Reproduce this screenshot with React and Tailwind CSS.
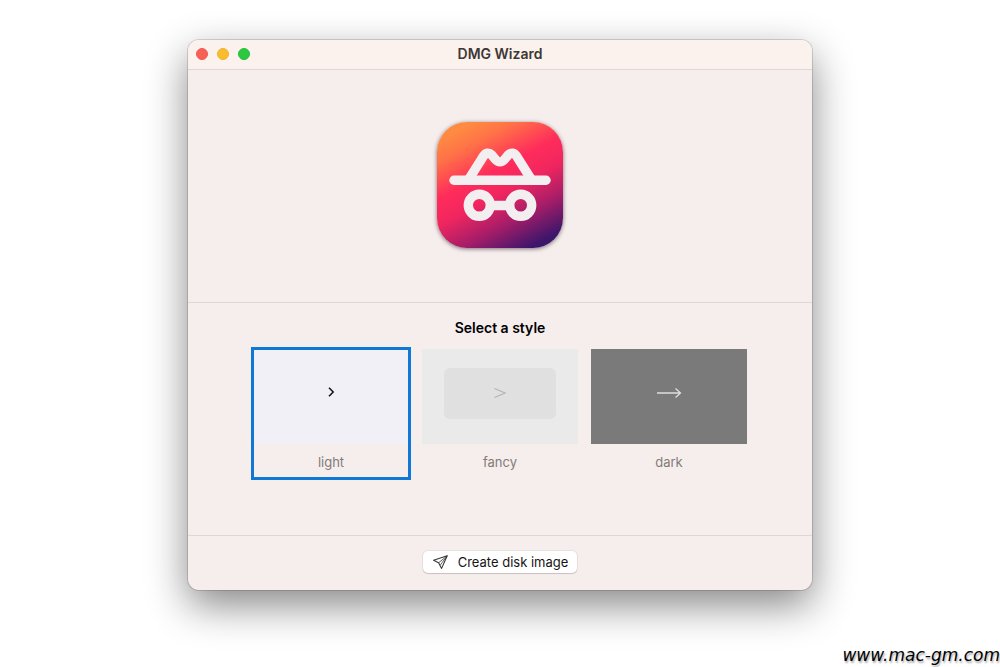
import { useState } from "react";

function AppIcon() {
  return (
    <svg
      viewBox="0 0 126 126"
      className="size-[126px] rounded-[30px] shadow-[0_1px_4px_rgba(60,40,60,0.65)]"
      role="img"
      aria-label="Application icon"
    >
      <defs>
        <linearGradient id="icon-fill" gradientUnits="userSpaceOnUse" x1="0" y1="0" x2="76" y2="146">
          <stop offset="0.1" stopColor="#ff8b42" />
          <stop offset="0.22" stopColor="#ff7247" />
          <stop offset="0.42" stopColor="#ff2c5b" />
          <stop offset="0.56" stopColor="#f1265f" />
          <stop offset="0.74" stopColor="#a81d68" />
          <stop offset="0.94" stopColor="#3b166b" />
        </linearGradient>
      </defs>
      <rect width="126" height="126" fill="url(#icon-fill)" />
      <g fill="none" stroke="#f3eff0" strokeWidth="9.4" strokeLinecap="round" strokeLinejoin="round">
        <path d="M17 58.3H109" />
        <path d="M32 57L46.2 34.4Q50.2 28.6 55 33.2L58.4 37.4Q63 42.4 67.6 37.4L71 33.2Q75.8 28.6 79.8 34.4L94 57" />
        <circle cx="42.3" cy="83.3" r="11" />
        <circle cx="83.7" cy="83.3" r="11" />
        <path d="M53.5 83.5H72.5" strokeLinecap="butt" />
      </g>
    </svg>
  );
}

function LightPreview() {
  return (
    <span className="flex h-[95px] items-center justify-center bg-[#f0f0f6] pb-2.5">
      <svg viewBox="0 0 8 12" className="h-3 w-2" fill="none" stroke="#111" strokeWidth="1.5">
        <path d="M2 1.8L6.2 6L2 10.2" />
      </svg>
    </span>
  );
}

function FancyPreview() {
  return (
    <span className="flex h-[95px] items-center justify-center bg-[#eaeaea] pb-1.5">
      <span className="flex h-[51px] w-28 items-center justify-center rounded-md bg-[#e0e0e0] pb-0.5">
        <svg viewBox="0 0 14 12" className="h-3 w-3.5" fill="none" stroke="#b4b4b4" strokeWidth="1.2">
          <path d="M1.5 1.5L12 6L1.5 10.5" />
        </svg>
      </span>
    </span>
  );
}

function DarkPreview() {
  return (
    <span className="flex h-[95px] items-center justify-center bg-[#7a7a7a] pb-2">
      <svg viewBox="0 0 26 12" className="h-3 w-[26px]" fill="none" stroke="#dedede" strokeWidth="1.3">
        <path d="M1 6H24M19.5 1.5L24.5 6L19.5 10.5" />
      </svg>
    </span>
  );
}

const styles = [
  { name: "light", Preview: LightPreview },
  { name: "fancy", Preview: FancyPreview },
  { name: "dark", Preview: DarkPreview },
];

export default function App() {
  const [selected, setSelected] = useState("light");
  return (
    <div className="relative flex min-h-screen flex-col items-center overflow-hidden bg-white py-10 font-['Inter',sans-serif] text-[13px] leading-4 text-[#171414]">
      <main className="flex w-[62.4%] flex-col overflow-clip rounded-[11px] bg-[#f6eeec] shadow-[0_0_0_1px_rgba(0,0,0,0.14),0_15px_40px_rgba(0,0,0,0.48)]">
        <header className="grid grid-cols-[1fr_auto_1fr] items-center border-b border-[#ddd7d5] bg-[#fbf2ed] px-2 pt-1.5 pb-[7px]">
          <div className="flex gap-[9px]">
            <button aria-label="Close" className="size-3 rounded-full border border-[#ec5a52] bg-[#f85f57]" />
            <button aria-label="Minimize" className="size-3 rounded-full border border-[#eeb22e] bg-[#fabc2f]" />
            <button aria-label="Zoom" className="size-3 rounded-full border border-[#27bb3b] bg-[#2bc840]" />
          </div>
          <h1 className="text-[14px] leading-4 font-semibold text-[#3d3836]">DMG Wizard</h1>
        </header>

        <section className="flex justify-center border-b border-[#ddd7d5] pt-[52px] pb-[54px]">
          <AppIcon />
        </section>

        <section className="flex flex-col items-center border-b border-[#ddd7d5] pt-[17px] pb-[57px]">
          <h2 className="text-[14px] leading-4 font-semibold text-black">Select a style</h2>
          <div className="mt-[13px] flex gap-[13px]">
            {styles.map(({ name, Preview }) => (
              <label
                key={name}
                className="w-[156px] text-center text-[#827b79] has-checked:outline-3 has-checked:-outline-offset-1 has-checked:outline-[#0f78d4]"
              >
                <input
                  type="radio"
                  name="style"
                  value={name}
                  checked={selected === name}
                  onChange={() => setSelected(name)}
                  className="sr-only"
                />
                <Preview />
                <span className="block pt-2.5 pb-2">{name}</span>
              </label>
            ))}
          </div>
        </section>

        <footer className="flex justify-center pt-[15px] pb-[17px]">
          <button className="flex items-center gap-2 rounded-[5px] bg-white px-[9px] py-[3px] text-[13px] leading-4 shadow-[0_0_0_1px_rgba(0,0,0,0.05),0_1px_1px_rgba(0,0,0,0.15)]">
            <svg viewBox="0 0 18 16" className="h-4 w-[18px]" fill="none" stroke="#3a3838" strokeWidth="1.1" strokeLinejoin="round">
              <path d="M15.2 1.8L1.6 6.3L6.6 8.8L9.6 14.4Z" />
              <path d="M15.2 1.8L6.6 8.8M15.2 1.8L8.2 11.2" strokeWidth="0.8" />
            </svg>
            Create disk image
          </button>
        </footer>
      </main>

      <p className="absolute right-0 bottom-0.5 font-['DejaVu_Sans',sans-serif] text-[17px] leading-5 text-black italic [text-shadow:1px_2px_2px_rgba(0,0,0,0.35)]">
        www.mac-gm.com
      </p>
    </div>
  );
}
